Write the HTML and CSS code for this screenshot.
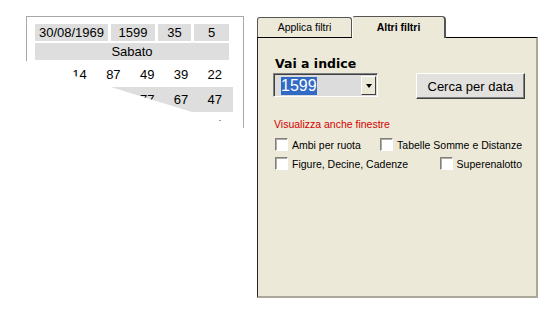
FILE: index.html
```html
<!DOCTYPE html>
<html lang="it">
<head>
  <meta charset="UTF-8" />
  <title>Estrazione - Altri filtri</title>
  <link rel="stylesheet" href="styles.css">
</head>
<body>

  <div class="screen">

    <!-- Estrazione -->
    <div class="extract">
      <div class="head">
        <span class="cell">30/08/1969</span>
        <span class="cell">1599</span>
        <span class="cell">35</span>
        <span class="cell">5</span>
        <span class="cell day">Sabato</span>
      </div>
      <div class="draw">
        <span>14</span><span>87</span><span>49</span><span>39</span><span>22</span>
      </div>
      <div class="draw shaded">
        <span>8</span><span>23</span><span>77</span><span>67</span><span>47</span>
      </div>
      <div class="draw">
        <span>52</span><span>11</span><span>60</span><span>5</span><span>34</span>
      </div>
    </div>

    <!-- Filtri -->
    <div class="dialog">
      <div class="tabs">
        <div class="tab">Applica filtri</div>
        <div class="tab active">Altri filtri</div>
      </div>
      <div class="panel">
        <div class="label-big">Vai a indice</div>
        <div class="search">
          <div class="combo">
            <span class="value">1599</span>
            <span class="drop"><span class="arrow"></span></span>
          </div>
          <button class="btn">Cerca per data</button>
        </div>

        <div class="note">Visualizza anche finestre</div>
        <div class="opts">
          <div class="opt-row">
            <label class="check"><span class="box"></span>Ambi per ruota</label>
            <label class="check"><span class="box"></span>Tabelle Somme e Distanze</label>
          </div>
          <div class="opt-row">
            <label class="check"><span class="box"></span>Figure, Decine, Cadenze</label>
            <label class="check"><span class="box"></span>Superenalotto</label>
          </div>
        </div>
      </div>
    </div>

  </div>

</body>
</html>
```

FILE: styles.css
```css
* {
  margin: 0;
  padding: 0;
  box-sizing: border-box;
}

body {
  background: #fff;
  color: #000;
  font-family: "Liberation Sans", Arial, sans-serif;
}

.screen {
  display: flex;
  align-items: flex-start;
  gap: 13px;
  padding: 16px 0 0 26px;
}

/* left: clipped extraction table */
.extract {
  width: 218px;
  height: 122px;
  border: 1px solid #a9a8a2;
  border-bottom: none;
  padding: 7px 0 0 8px;
  clip-path: polygon(0 0, 100% 0, 100% 112px, 0 45px);
}

.head {
  display: grid;
  grid-template-columns: 73px 44px 33px 35px;
  column-gap: 3px;
  row-gap: 2px;
}

.cell {
  height: 17px;
  line-height: 17px;
  background: #dedede;
  text-align: center;
  font-size: 13px;
}

.cell.day {
  grid-column: 1 / -1;
}

.draw {
  display: grid;
  grid-template-columns: repeat(5, 1fr);
  width: 198px;
  height: 25px;
  padding: 0 11px 0 18px;
  line-height: 25px;
  font-size: 13px;
  text-align: right;
}

.head + .draw {
  margin-top: 2px;
}

.draw.shaded {
  background: #dedede;
}

/* right: tabbed dialog */
.dialog {
  width: 281px;
}

.tabs {
  display: flex;
  align-items: flex-end;
  height: 21px;
  position: relative;
  z-index: 1;
}

.tab {
  width: 95px;
  height: 20px;
  background: #ece9d8;
  border: 1px solid #555;
  border-bottom: none;
  border-radius: 3px 3px 0 0;
  text-align: center;
  font-size: 10.5px;
  line-height: 18px;
}

.tab.active {
  width: 94px;
  height: 22px;
  margin-bottom: -1px;
  border-left-color: #fff;
  border-right: 2px solid #555;
  border-radius: 3px 4px 0 0;
  font-weight: bold;
  line-height: 20px;
}

.panel {
  height: 261px;
  background: #ece9d8;
  border-top: 1px solid #000;
  border-left: 1px solid #222;
  border-right: 2px solid #aca899;
  border-bottom: 2px solid #aca899;
  padding: 18px 0 0 15px;
}

.label-big {
  font-family: "DejaVu Sans", Verdana, sans-serif;
  font-weight: bold;
  font-size: 12.5px;
  line-height: 15px;
  padding-left: 2px;
}

.search {
  display: flex;
  align-items: flex-start;
  margin-top: 2px;
}

.combo {
  width: 105px;
  height: 24px;
  display: flex;
  align-items: center;
  justify-content: space-between;
  background: #dcdcdc;
  border: 1px solid;
  border-color: #808080 #fff #fff #808080;
  box-shadow: inset 1px 1px #404040;
  padding: 1px 1px 0 7px;
}

.value {
  background: #316ac5;
  color: #fff;
  font-size: 16px;
  line-height: 18px;
}

.drop {
  width: 15px;
  height: 19px;
  background: #ece9d8;
  border: 1px solid;
  border-color: #fff #404040 #404040 #fff;
  display: flex;
  align-items: center;
  justify-content: center;
}

.arrow {
  width: 0;
  height: 0;
  border-left: 3.5px solid transparent;
  border-right: 3.5px solid transparent;
  border-top: 4px solid #000;
}

.btn {
  width: 109px;
  height: 26px;
  margin-left: 38px;
  background: #e2e1dd;
  border: 1px solid;
  border-color: #fff #404040 #404040 #fff;
  box-shadow: inset -1px -1px #808080;
  font-family: "Liberation Sans", Arial, sans-serif;
  font-size: 13px;
  color: #000;
}

.note {
  margin-top: 19px;
  padding-left: 1px;
  color: #d40000;
  font-size: 10.5px;
  line-height: 13px;
}

.opts {
  width: 249px;
  margin-top: 7px;
  padding-left: 2px;
}

.opt-row {
  display: flex;
  justify-content: space-between;
  height: 13px;
}

.opt-row + .opt-row {
  margin-top: 6px;
}

.check {
  display: flex;
  align-items: center;
  gap: 4px;
  font-size: 10.5px;
}

.box {
  width: 13px;
  height: 13px;
  background: #fff;
  border: 1px solid;
  border-color: #808080 #fff #fff #808080;
  box-shadow: inset 1px 1px #b0ada0;
}
```
